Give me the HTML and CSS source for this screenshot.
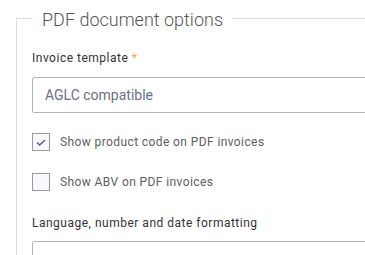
FILE: index.html
```html
<!DOCTYPE html>
<html lang="en">
<head>
    <meta charset="UTF-8">
    <title>PDF document options</title>
    <link rel="stylesheet" href="styles.css">
</head>
<body>
    <fieldset class="options">
        <legend>PDF document options</legend>

        <div class="field">
            <label class="field-label">Invoice template <span class="req">*</span></label>
            <div class="select">AGLC compatible</div>
        </div>

        <label class="check-row first">
            <span class="check checked">
                <svg viewBox="0 0 18 18">
                    <path d="M4.5 9.5l3 2.8 6-5.6"/>
                </svg>
            </span>
            <span class="check-text">Show product code on PDF invoices</span>
        </label>

        <label class="check-row">
            <span class="check"></span>
            <span class="check-text">Show ABV on PDF invoices</span>
        </label>

        <div class="field lang">
            <label class="field-label">Language, number and date formatting</label>
            <div class="select"></div>
        </div>
    </fieldset>
</body>
</html>
```

FILE: styles.css
```css
* {
    margin: 0;
    padding: 0;
    box-sizing: border-box;
}

body {
    font-family: Roboto, 'Liberation Sans', sans-serif;
    background: #fff;
    width: 365px;
    height: 255px;
    overflow: hidden;
}

.options {
    width: 520px;
    margin: 5px 0 0 16px;
    padding: 17px 15px 0;
    border: 1px solid #dcdcdc;
    min-width: 0;
}

.options legend {
    font-size: 18px;
    line-height: 22px;
    font-weight: 300;
    color: #555;
    padding: 4px 10px 0 10px;
}

.field {
    display: flex;
    flex-direction: column;
}

.field-label {
    font-size: 12px;
    line-height: 16px;
    font-weight: 400;
    letter-spacing: 0.5px;
    color: #333;
    padding-top: 2px;
}

.req {
    color: #f5a340;
}

.select {
    margin-top: 11px;
    height: 36px;
    border: 1px solid #b4b4b4;
    border-radius: 2px;
    padding: 0 12px;
    display: flex;
    align-items: center;
    font-size: 14px;
    color: #6b6f80;
}

.check-row {
    display: flex;
    align-items: center;
    gap: 10px;
    margin-top: 22px;
}

.check-row.first {
    margin-top: 20px;
}

.check {
    width: 18px;
    height: 18px;
    border: 1px solid #9a9a9a;
    background: #f8f9fd;
    display: flex;
    align-items: center;
    justify-content: center;
}

.check svg {
    width: 16px;
    height: 16px;
    fill: none;
    stroke: #4b58ad;
    stroke-width: 1.6;
}

.check-text {
    font-size: 12px;
    letter-spacing: 0.4px;
    color: #5e5e5e;
}

.lang {
    margin-top: 22px;
}

.lang .select {
    margin-top: 10px;
}
```
